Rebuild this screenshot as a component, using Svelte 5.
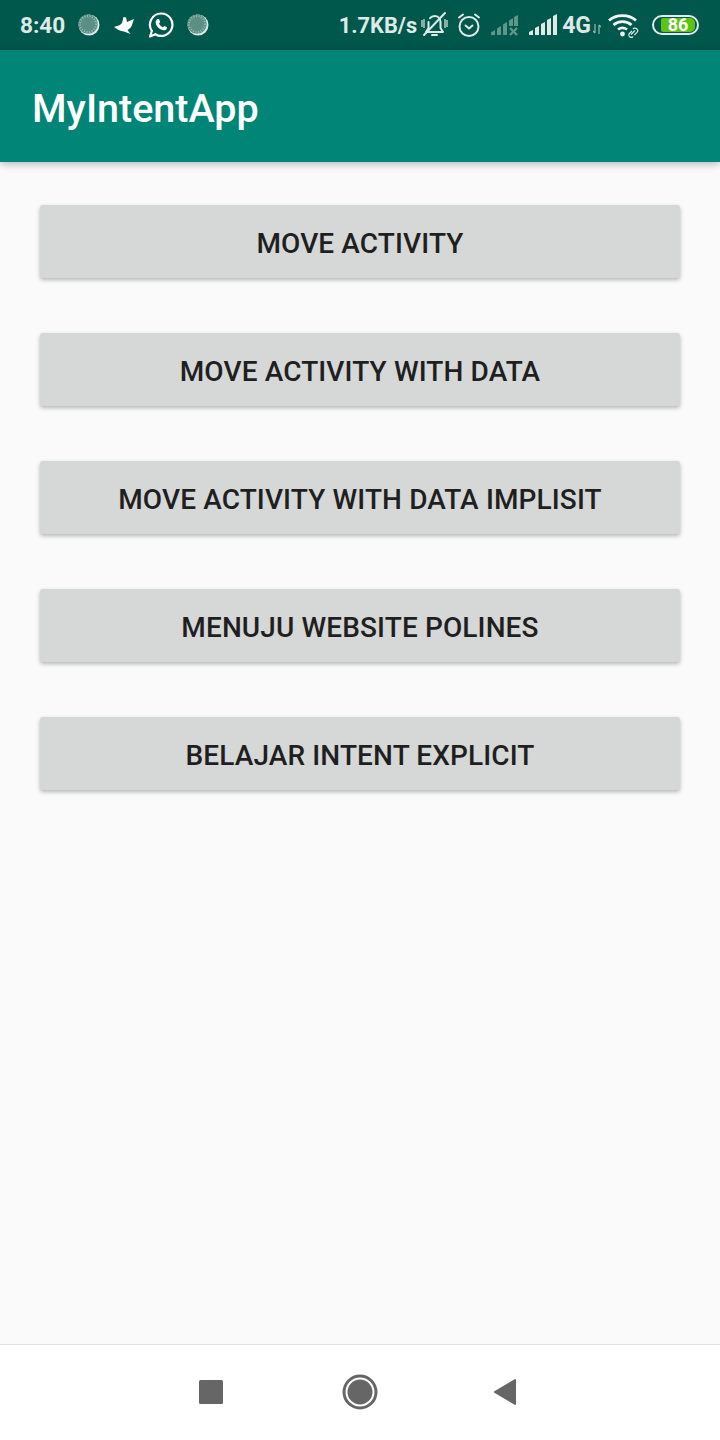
<script>
  const BUTTONS = [
    'Move Activity',
    'Move Activity with Data',
    'Move Activity with Data Implisit',
    'Menuju Website Polines',
    'Belajar Intent Explicit',
  ];
</script>

{#snippet dotIcon()}
  <svg class="ic dot" width="22" height="22" viewBox="0 0 22 22">
    <circle cx="11" cy="11" r="10.5" fill="#dfe9e6" />
    <circle cx="10" cy="10" r="9.8" fill="#5b8f84" />
    <circle cx="10" cy="10" r="8" fill="none" stroke="#9dbdb5" stroke-width="2" stroke-dasharray="1 1.6" />
  </svg>
{/snippet}

<div class="screen">
  <div class="statusbar">
    <span class="time">8:40</span>
    <div class="left-icons">
      {@render dotIcon()}
      <svg class="ic bird" width="22" height="20" viewBox="0 0 22 20">
        <path d="M1 12 L7 10 L9 8 L10.5 2 L13 2.5 L14 7 L21 4 L19 10 C18 13 16 14 14.5 15 L17.5 19 L11 16.5 C7 16.5 4 14 1 12 Z" fill="#fff" />
      </svg>
      <svg class="ic wa" width="26" height="26" viewBox="0 0 26 26">
        <path d="M13.2 1.5 A11.2 11.2 0 1 1 7.3 22.2 L2 24.5 L3.9 19 A11.2 11.2 0 0 1 13.2 1.5 Z" fill="none" stroke="#fff" stroke-width="2.2" stroke-linejoin="round" />
        <path d="M9.7 7 L11 7 L12.2 9.9 L11 11.5 C11.8 13.2 13 14.4 14.9 15.3 L16.4 13.9 L19 15.3 L18.7 17 C17.5 18.7 15 18.6 12.5 17.2 C9.7 15.6 7.8 13 7.6 10.7 C7.5 9 8.4 7.6 9.7 7 Z" fill="#fff" />
      </svg>
      {@render dotIcon()}
    </div>

    <div class="right-icons">
      <span class="speed">1.7KB/s</span>
      <svg class="ic mute" width="28" height="28" viewBox="0 0 28 28">
        <g fill="none" stroke="#dfe9e6" stroke-width="2" stroke-linecap="round" stroke-linejoin="round">
          <path d="M5 21 H22 L19.5 17 V11 C19.5 7.5 17 5 13.5 5 C11.5 5 10 6 9 7.2 M7.5 11 V17 L5 21" />
          <path d="M11 24 H16" />
          <path d="M24 2 L3 24" />
        </g>
        <path d="M1 9v7M3 8v9M24 8v9M26 9v7" stroke="#a8c4bd" stroke-width="1.6" />
      </svg>
      <svg class="ic alarm" width="24" height="26" viewBox="0 0 24 26">
        <g fill="none" stroke="#dfe9e6" stroke-width="2" stroke-linecap="round" stroke-linejoin="round">
          <circle cx="12" cy="14.5" r="9.5" />
          <path d="M8.5 13.5 L12 16.5 L15.5 13.5" />
          <path d="M2 5.5 L6 2.5 M22 5.5 L18 2.5" />
        </g>
      </svg>
      <svg class="ic sig1" width="27" height="22" viewBox="0 0 27 22">
        <g fill="#5f978b">
          <path d="M0 21 V18.5 L4 16 V21 Z" />
          <path d="M6 21 V14.5 L10 12 V21 Z" />
          <path d="M12 21 V10.5 L16 8 V21 Z" />
          <path d="M18 12 V6.5 L22 4 V12 Z" />
          <path d="M23 12 V3 L27 1 V12 Z" />
        </g>
        <path d="M19 14 L26 21 M26 14 L19 21" stroke="#5f978b" stroke-width="2.4" />
      </svg>
      <svg class="ic sig2" width="28" height="22" viewBox="0 0 28 22">
        <g fill="#dfe9e6">
          <path d="M0 21 V18 L4 16 V21 Z" />
          <path d="M6 21 V14 L10 12 V21 Z" />
          <path d="M12 21 V10 L16 8 V21 Z" />
          <path d="M18 21 V6 L22 4 V21 Z" />
          <path d="M24 21 V2 L28 0 V21 Z" />
        </g>
      </svg>
      <span class="net">4G</span>
      <svg class="ic arrows" width="8" height="10" viewBox="0 0 8 10">
        <path d="M2 0v9M0 7l2 2M6 10V1M8 3L6 1" stroke="#8fb3aa" stroke-width="1.3" fill="none" />
      </svg>
      <svg class="ic wifi" width="33" height="25" viewBox="0 0 33 25">
        <g fill="none" stroke="#f1f5f4" stroke-width="2.8">
          <path d="M1 7.5 C8 1 21 1 28 7.5" />
          <path d="M5.5 12 C10.5 7.6 18.5 7.6 23.5 12" />
          <path d="M10 16.5 C12.8 14.4 16.2 14.4 19 16.5" />
        </g>
        <circle cx="14.5" cy="21" r="2.4" fill="#f1f5f4" />
        <path d="M23 21.5 L27 17.5 M25 23.5 a2 2 0 0 1 -3.6 -3 L24 18 M25 16 a2 2 0 0 1 4 3.4 L26.4 22" fill="none" stroke="#dfe9e6" stroke-width="1.2" />
      </svg>
      <div class="battery"><span class="level">86</span></div>
    </div>
  </div>

  <header class="appbar">MyIntentApp</header>

  <main class="content">
    {#each BUTTONS as label}
      <button type="button">{label}</button>
    {/each}
  </main>

  <nav class="navbar">
    <svg width="24" height="24" viewBox="0 0 24 24"><rect width="24" height="24" rx="1.5" fill="#666" /></svg>
    <svg width="36" height="36" viewBox="0 0 36 36">
      <circle cx="18" cy="18" r="16" fill="none" stroke="#666" stroke-width="3" />
      <circle cx="18" cy="18" r="12.5" fill="#666" />
    </svg>
    <svg class="back" width="24" height="28" viewBox="0 0 24 28"><path d="M22 1 Q23 1 23 2 V26 Q23 27 22 27 L1 14.5 V13.5 Z" fill="#666" /></svg>
  </nav>
</div>

<style>
  :global(body) { margin: 0; }

  .screen {
    width: 720px;
    height: 1440px;
    display: flex;
    flex-direction: column;
    background: #fafafa;
    font-family: Roboto, "Liberation Sans", sans-serif;
    overflow: hidden;
  }

  .statusbar {
    height: 50px;
    flex: none;
    display: flex;
    align-items: center;
    justify-content: space-between;
    padding: 0 21px 0 20px;
    background: #00574b;
    color: #dfe9e6;
    font-weight: 700;
  }
  .time { font-size: 22.6px; }
  .left-icons { display: flex; align-items: center; margin-left: 13px; margin-right: auto; gap: 13px; }
  .ic { display: block; flex: none; }
  .right-icons { display: flex; align-items: center; }
  .speed { font-size: 21.8px; white-space: nowrap; }
  .mute { margin-left: 4px; }
  .alarm { margin-left: 8px; }
  .sig1 { margin-left: 10px; }
  .sig2 { margin-left: 11px; }
  .net { font-size: 23px; margin-left: 5px; }
  .arrows { margin-left: 2px; margin-top: 8px; }
  .wifi { margin-left: 7px; }
  .battery {
    width: 47px;
    height: 20px;
    margin-left: 11px;
    padding: 1px 2px;
    box-sizing: border-box;
    border: 2px solid #e4ecea;
    border-radius: 10px;
    display: flex;
  }
  .level {
    width: 34px;
    margin-left: 5px;
    background: #5cc414;
    border-radius: 2px 5px 5px 2px;
    color: #fff;
    font-size: 18px;
    line-height: 14px;
    text-align: center;
  }

  .appbar {
    height: 112px;
    flex: none;
    box-sizing: border-box;
    padding: 5px 32px 0;
    display: flex;
    align-items: center;
    background: #008577;
    color: #fff;
    font-size: 39.5px;
    font-weight: 500;
    box-shadow: 0 2px 8px rgba(0, 0, 0, 0.28);
    position: relative;
  }

  .content {
    flex: 1;
    display: flex;
    flex-direction: column;
    gap: 55px;
    padding: 43px 40px 0;
  }
  button {
    height: 73px;
    flex: none;
    padding: 4px 0 0;
    border: none;
    border-radius: 3px;
    background: #d6d7d7;
    color: #1f1f1f;
    font-family: inherit;
    font-size: 28px;
    font-weight: 500;
    letter-spacing: 0.12px;
    text-transform: uppercase;
    box-shadow: 0 2px 4px rgba(0, 0, 0, 0.28);
  }

  .navbar {
    height: 96px;
    flex: none;
    display: flex;
    align-items: center;
    justify-content: center;
    gap: 119px;
    padding: 0 4px 1px 0;
    box-sizing: border-box;
    background: #fff;
    border-top: 1px solid #e2e2e2;
  }
  .back { margin-left: -4px; }
</style>
